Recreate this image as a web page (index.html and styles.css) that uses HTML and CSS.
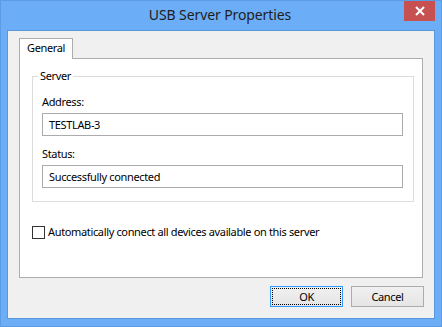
FILE: index.html
```html
<!DOCTYPE html>
<html lang="en">
<head>
    <meta charset="UTF-8">
    <title>USB Server Properties</title>
    <link rel="stylesheet" href="styles.css">
</head>
<body>
    <div class="window">
        <div class="titlebar">
            <span></span>
            <div class="title">USB Server Properties</div>
            <button class="close-btn" aria-label="Close">
                <svg width="10" height="10" viewBox="0 0 10 10">
                    <path d="M1 1 L9 9 M9 1 L1 9" stroke="#fff" stroke-width="2" fill="none"/>
                </svg>
            </button>
        </div>

        <div class="client">
            <div class="tabs">
                <div class="tab active">General</div>
            </div>

            <div class="tab-panel">
                <fieldset class="group">
                    <legend>Server</legend>
                    <label class="field-label">Address:</label>
                    <div class="textbox">TESTLAB-3</div>
                    <label class="field-label status-label">Status:</label>
                    <div class="textbox">Successfully connected</div>
                </fieldset>

                <div class="check-row">
                    <span class="checkbox"></span>
                    <span>Automatically connect all devices available on this server</span>
                </div>
            </div>

            <div class="buttons">
                <button class="btn default">OK</button>
                <button class="btn">Cancel</button>
            </div>
        </div>
    </div>
</body>
</html>
```

FILE: styles.css
```css
body {
    margin: 0;
    font-family: 'Noto Sans', 'Open Sans', sans-serif;
    font-size: 11px;
    letter-spacing: -0.35px;
    color: #000;
}

.window {
    width: 442px;
    height: 327px;
    box-sizing: border-box;
    background: #6badf6;
    border: 1px solid #5c9ce4;
    display: flex;
    flex-direction: column;
}

.titlebar {
    height: 29px;
    display: grid;
    grid-template-columns: 1fr auto 1fr;
    align-items: start;
}

.title {
    font-size: 14px;
    letter-spacing: -0.1px;
    line-height: 28px;
    color: #1e1e1e;
    padding-right: 2px;
}

.close-btn {
    justify-self: end;
    width: 31px;
    height: 20px;
    margin-right: 6px;
    padding: 0;
    border: none;
    background: #c75050;
    display: flex;
    align-items: center;
    justify-content: center;
}

.client {
    margin: 0 6px;
    height: 289px;
    box-sizing: border-box;
    background: #f0f0f0;
    border: 1px solid #5a96da;
    padding: 7px 10px 0 11px;
}

.tabs {
    display: flex;
    height: 20px;
}

.tab {
    width: 54px;
    box-sizing: border-box;
    height: 21px;
    background: #fff;
    border: 1px solid #adadad;
    border-bottom: none;
    line-height: 17px;
    padding-left: 7px;
    position: relative;
    z-index: 1;
}

.tab-panel {
    width: 404px;
    height: 220px;
    box-sizing: border-box;
    background: #fff;
    border: 1px solid #adadad;
    padding: 0 8px 0 12px;
}

.group {
    margin: 10px 0 0 0;
    padding: 11px 10px 13px 9px;
    border: 1px solid #dcdcdc;
}

.group legend {
    padding: 0 2px;
    margin-left: -4px;
    line-height: 14px;
}

.field-label {
    display: block;
    line-height: 15px;
    margin-bottom: 4px;
}

.status-label {
    margin-top: 10px;
}

.textbox {
    height: 23px;
    box-sizing: border-box;
    border: 1px solid #ababab;
    padding-left: 6px;
    line-height: 21px;
}

.check-row {
    display: flex;
    align-items: flex-start;
    gap: 3px;
    margin-top: 22px;
    line-height: 15px;
}

.checkbox {
    width: 13px;
    height: 13px;
    box-sizing: border-box;
    border: 1px solid #333;
    background: #fff;
    margin-top: 2px;
}

.buttons {
    display: flex;
    justify-content: flex-end;
    gap: 8px;
    margin-top: 8px;
}

.btn {
    width: 73px;
    height: 21px;
    padding: 0;
    font-family: inherit;
    font-size: 11px;
    letter-spacing: inherit;
    color: #000;
    background: linear-gradient(#f0f0f0, #e5e5e5);
    border: 1px solid #acacac;
}

.btn.default {
    border-color: #3399ff;
    outline: 1px dotted #000;
    outline-offset: -3px;
}
```
